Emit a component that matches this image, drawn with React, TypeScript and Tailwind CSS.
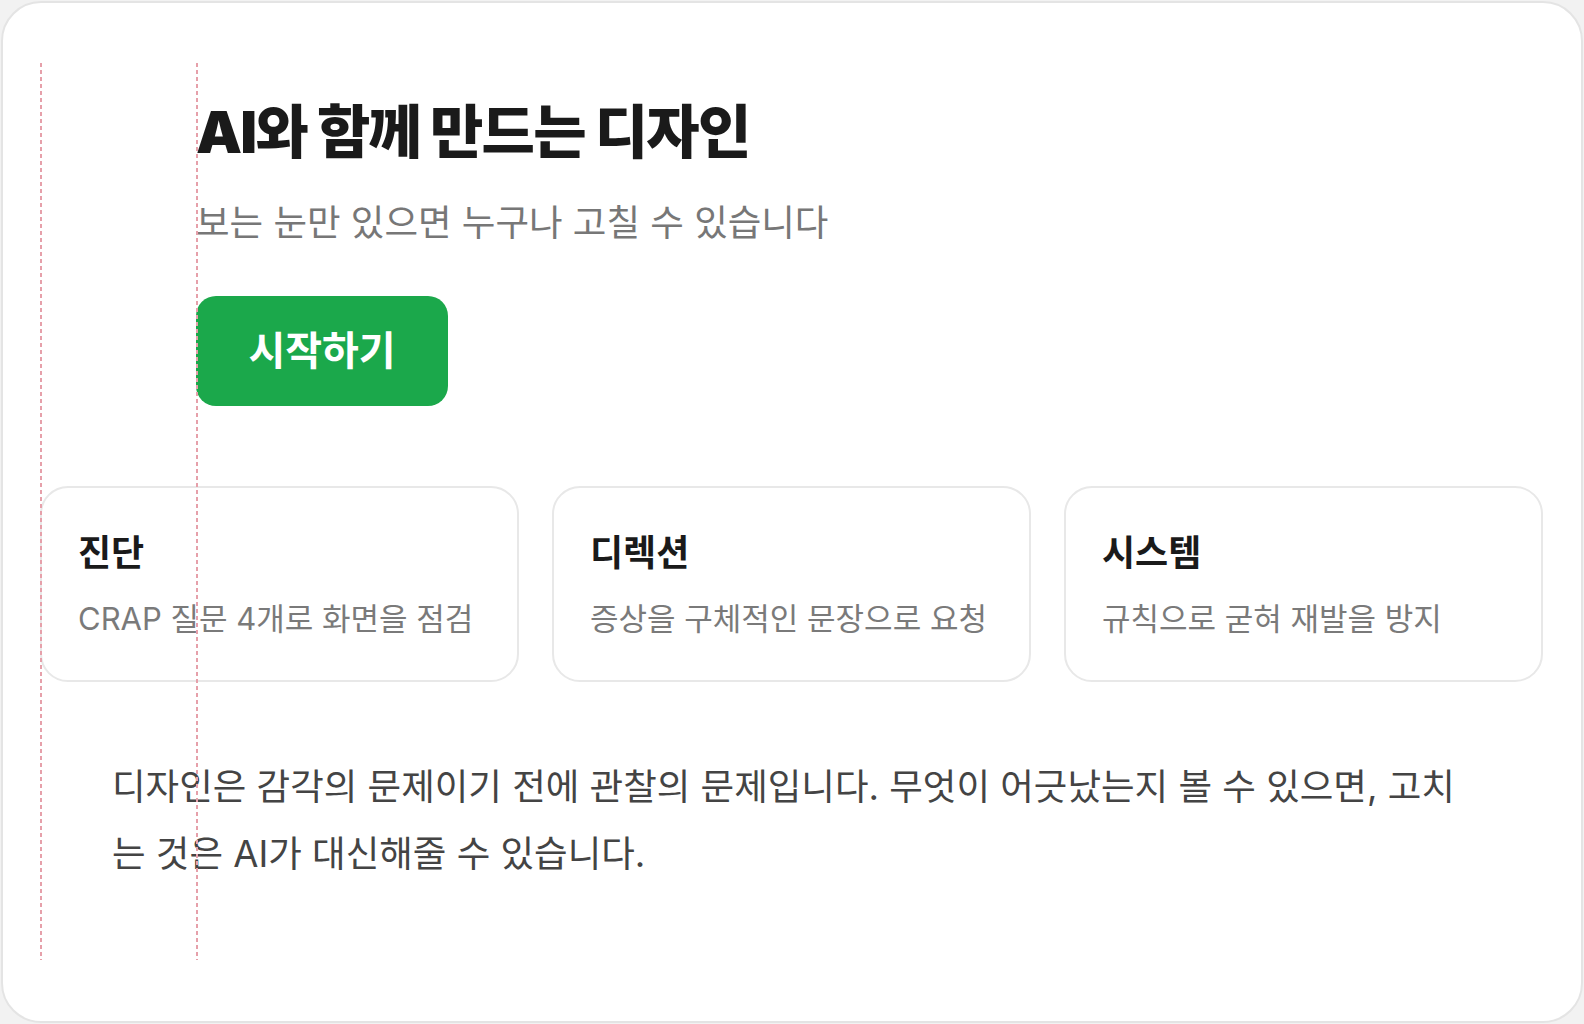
import React from 'react';

const features = [
  { title: '진단', desc: 'CRAP 질문 4개로 화면을 점검' },
  { title: '디렉션', desc: '증상을 구체적인 문장으로 요청' },
  { title: '시스템', desc: '규칙으로 굳혀 재발을 방지' },
];

// Pink dashed layout guides drawn over the content
const Guide = ({ className }: { className: string }) => (
  <div
    className={`pointer-events-none absolute top-0 bottom-0 w-[2px] bg-[repeating-linear-gradient(to_bottom,#e6a0aa_0px,#e6a0aa_4px,transparent_4px,transparent_7px)] ${className}`}
  />
);

export default function App() {
  return (
    <div className="w-[1584px] h-[1024px] bg-[#f2f2f2] p-px font-['Inter','Noto_Sans_CJK_KR',sans-serif]">
      <div className="h-full rounded-[40px] border-2 border-[#e4e4e4] bg-white pl-[37px] pt-[60px]">
        <div className="relative w-[1503px] h-[897px] pt-[36px]">
          {/* Hero */}
          <div className="pl-[156px] flex flex-col items-start">
            <h1 className="text-[58px] leading-[67px] font-black tracking-[-0.03em] text-[#1a1a1a]">
              AI와 함께 만드는 디자인
            </h1>
            <p className="mt-[33px] text-[36.5px] leading-[48px] text-[#777777]">
              보는 눈만 있으면 누구나 고칠 수 있습니다
            </p>
            <button className="mt-[49px] w-[252px] h-[110px] rounded-[20px] bg-[#1ba84b] text-white text-[40px] font-bold">
              시작하기
            </button>
          </div>

          {/* Feature cards */}
          <div className="mt-[80px] grid grid-cols-3 gap-[33px]">
            {features.map((f) => (
              <div
                key={f.title}
                className="h-[196px] rounded-[28px] border-2 border-[#e8e8e8] bg-white px-[36px] pt-[44px]"
              >
                <h3 className="text-[36px] leading-[42px] font-bold text-[#1a1a1a]">{f.title}</h3>
                <p className="mt-[24px] text-[31px] leading-[42px] text-[#7a7a7a]">{f.desc}</p>
              </div>
            ))}
          </div>

          {/* Body copy */}
          <p className="mt-[72px] pl-[72px] pr-[80px] text-[36.5px] leading-[67px] text-[#444444]">
            디자인은 감각의 문제이기 전에 관찰의 문제입니다. 무엇이 어긋났는지 볼 수 있으면, 고치는 것은 AI가 대신해줄 수 있습니다.
          </p>

          <Guide className="left-0" />
          <Guide className="left-[156px]" />
        </div>
      </div>
    </div>
  );
}
